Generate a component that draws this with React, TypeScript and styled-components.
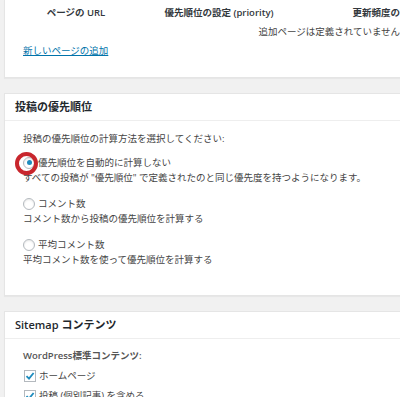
import styled, { createGlobalStyle } from 'styled-components';

const GlobalStyle = createGlobalStyle`
  html, body {
    margin: 0;
    padding: 0;
    background: #f1f1f1;
    overflow: hidden;
  }
  body {
    font-family: "Open Sans", "Noto Sans CJK JP", sans-serif;
    color: #444;
    font-size: 9.5px;
  }
`;

const options = [
  {
    label: '優先順位を自動的に計算しない',
    desc: 'すべての投稿が "優先順位" で定義されたのと同じ優先度を持つようになります。',
    checked: true,
  },
  { label: 'コメント数', desc: 'コメント数から投稿の優先順位を計算する', checked: false },
  { label: '平均コメント数', desc: '平均コメント数を使って優先順位を計算する', checked: false },
];

function App() {
  return (
    <Page>
      <GlobalStyle />
      <Panel $first>
        <PageTable>
          <Th>ページの URL</Th>
          <Th>優先順位の設定 (priority)</Th>
          <Th>更新頻度の設定 (changefreq)</Th>
          <Th>最終更新日</Th>
          <EmptyRow>追加ページは定義されていません。</EmptyRow>
        </PageTable>
        <AddLink href="#">新しいページの追加</AddLink>
      </Panel>

      <Panel>
        <PanelHeader>投稿の優先順位</PanelHeader>
        <PanelBody $top={10} $bottom={28}>
          <Intro>投稿の優先順位の計算方法を選択してください:</Intro>
          {options.map((o) => (
            <Option key={o.label}>
              <OptionLabel>
                <Radio $checked={o.checked}>{o.checked && <Highlight />}</Radio>
                {o.label}
              </OptionLabel>
              <OptionDesc>{o.desc}</OptionDesc>
            </Option>
          ))}
        </PanelBody>
      </Panel>

      <Panel>
        <PanelHeader>Sitemap コンテンツ</PanelHeader>
        <PanelBody $top={9} $bottom={20}>
          <SubTitle>WordPress標準コンテンツ:</SubTitle>
          <CheckRow>
            <Checkbox $checked>
              <svg width="10" height="10" viewBox="0 0 10 10">
                <path d="M1.5 5.2 L4 7.6 L8.6 2" fill="none" stroke="#1e8cbe" strokeWidth="1.8" />
              </svg>
            </Checkbox>
            ホームページ
          </CheckRow>
          <CheckRow>
            <Checkbox $checked>
              <svg width="10" height="10" viewBox="0 0 10 10">
                <path d="M1.5 5.2 L4 7.6 L8.6 2" fill="none" stroke="#1e8cbe" strokeWidth="1.8" />
              </svg>
            </Checkbox>
            投稿 (個別記事) を含める
          </CheckRow>
        </PanelBody>
      </Panel>
    </Page>
  );
}

export default App;

const Page = styled.div`
  width: 700px;
  padding-left: 4px;
`;

const Panel = styled.div<{ $first?: boolean }>`
  background: #fff;
  border: 1px solid #e5e5e5;
  border-top: ${(p) => (p.$first ? 'none' : '1px solid #e5e5e5')};
  box-shadow: 0 1px 1px rgba(0, 0, 0, 0.04);
  margin-bottom: 15px;
  padding-bottom: ${(p) => (p.$first ? '17px' : '0')};
`;

const PageTable = styled.div`
  display: grid;
  grid-template-columns: 118px 168px 226px 122px;
  margin-left: 12px;
  padding-top: 3px;
`;

const Th = styled.div`
  text-align: center;
  font-weight: 600;
  color: #32373c;
  line-height: 20px;
  white-space: nowrap;
`;

const EmptyRow = styled.div`
  grid-column: 1 / -1;
  text-align: center;
  line-height: 18px;
`;

const AddLink = styled.a`
  display: inline-block;
  margin: 1px 0 0 18px;
  line-height: 18px;
  color: #0073aa;
  text-decoration: underline;
`;

const PanelHeader = styled.div`
  height: 26px;
  line-height: 26px;
  padding-left: 10px;
  border-bottom: 1px solid #eee;
  font-size: 11px;
  font-weight: 600;
  color: #23282d;
`;

const PanelBody = styled.div<{ $top: number; $bottom: number }>`
  padding: ${(p) => p.$top}px 0 ${(p) => p.$bottom}px 18px;
`;

const Intro = styled.div`
  line-height: 16px;
  margin-bottom: 8px;
`;

const Option = styled.div`
  & + & {
    margin-top: 11px;
  }
`;

const OptionLabel = styled.div`
  display: flex;
  align-items: center;
  line-height: 15px;
`;

const OptionDesc = styled.div`
  line-height: 15px;
`;

const Radio = styled.span<{ $checked?: boolean }>`
  position: relative;
  box-sizing: border-box;
  width: 12px;
  height: 12px;
  margin-right: 3px;
  border: 1px solid #b4b9be;
  border-radius: 50%;
  background: #fff;
  box-shadow: inset 0 1px 2px rgba(0, 0, 0, 0.1);
  flex-shrink: 0;

  &::after {
    content: '';
    display: ${(p) => (p.$checked ? 'block' : 'none')};
    position: absolute;
    left: 2.5px;
    top: 2.5px;
    width: 5px;
    height: 5px;
    border-radius: 50%;
    background: #1e8cbe;
  }
`;

const Highlight = styled.span`
  position: absolute;
  left: -9px;
  top: -6px;
  width: 23px;
  height: 23px;
  box-sizing: border-box;
  border: 4px solid #c8262d;
  border-radius: 50%;
`;

const SubTitle = styled.div`
  line-height: 16px;
  font-weight: 600;
  color: #555;
`;

const CheckRow = styled.div`
  display: flex;
  align-items: center;
  margin-top: 4px;
  line-height: 16px;
`;

const Checkbox = styled.span<{ $checked?: boolean }>`
  box-sizing: border-box;
  width: 12px;
  height: 12px;
  margin: 0 3px 0 1px;
  border: 1px solid #b4b9be;
  background: #fff;
  display: flex;
  align-items: center;
  justify-content: center;
  flex-shrink: 0;
`;
